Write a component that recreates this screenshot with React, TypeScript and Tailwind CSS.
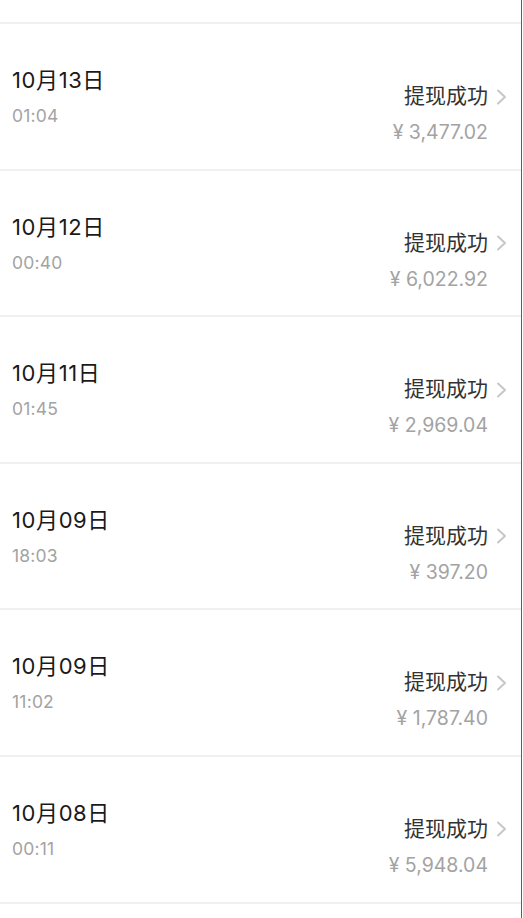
const records = [
  { date: "10月13日", time: "01:04", amount: "3,477.02" },
  { date: "10月12日", time: "00:40", amount: "6,022.92" },
  { date: "10月11日", time: "01:45", amount: "2,969.04" },
  { date: "10月09日", time: "18:03", amount: "397.20" },
  { date: "10月09日", time: "11:02", amount: "1,787.40" },
  { date: "10月08日", time: "00:11", amount: "5,948.04" },
]

const font = { fontFamily: 'Inter, "Noto Sans CJK SC", sans-serif' }

const Chevron = () => (
  <svg width="11" height="16" viewBox="0 0 11 16" fill="none" className="ml-[8px] mt-[1px]">
    <polyline points="2,1.5 9,8 2,14.5" stroke="#c7c7c7" strokeWidth="2" strokeLinecap="round" strokeLinejoin="round" />
  </svg>
)

const App = () => {
  return (
    <div className="min-h-screen w-[523px] bg-white" style={font}>
      <div className="w-[522px] min-h-screen border-r border-[#5f5f5f] bg-white">
        {/* top strip */}
        <div className="h-[24px] border-b-2 border-[#f0f0f0]" />

        {records.map((r, i) => (
          <div
            key={i}
            className="h-[146.6px] border-b-2 border-[#f0f0f0] flex justify-between pl-3 pr-[14px]"
          >
            {/* Left: date + time */}
            <div className="pt-[42px] flex flex-col gap-[11px]">
              <span className="text-[22px] leading-[28px] tracking-[0.6px] text-[#1a1a1a]">{r.date}</span>
              <span className="text-[17.5px] leading-[22px] tracking-[0.2px] text-[#a3a3a3]">{r.time}</span>
            </div>

            {/* Right: status + amount */}
            <div className="pt-[59px] flex flex-col items-end gap-[12px]">
              <div className="flex items-center">
                <span className="text-[21px] leading-[26px] text-[#333333]">提现成功</span>
                <Chevron />
              </div>
              <span className="text-[19.5px] leading-[22px] text-[#a3a3a3] pr-[19px]">¥ {r.amount}</span>
            </div>
          </div>
        ))}
      </div>
    </div>
  )
}

export default App
